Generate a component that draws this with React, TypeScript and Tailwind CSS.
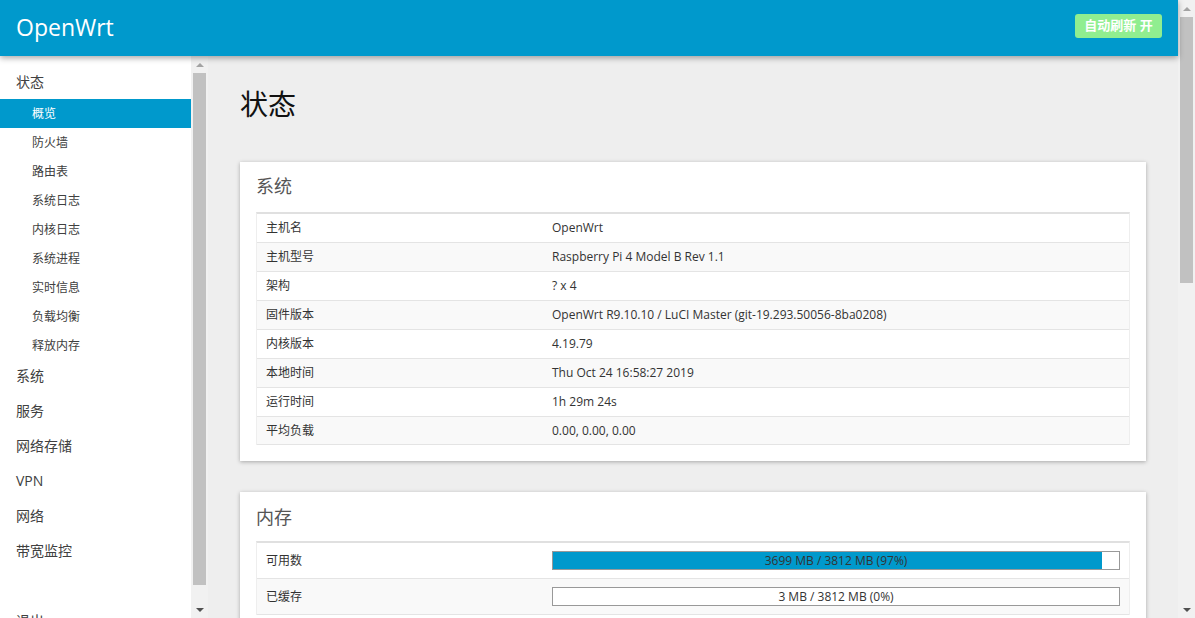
import React from 'react';

const font = { fontFamily: '"Open Sans", "Noto Sans CJK SC", sans-serif' };

const subItems = ['概览', '防火墙', '路由表', '系统日志', '内核日志', '系统进程', '实时信息', '负载均衡', '释放内存'];
const topItems = ['系统', '服务', '网络存储', 'VPN', '网络', '带宽监控'];

const sysRows: [string, string][] = [
  ['主机名', 'OpenWrt'],
  ['主机型号', 'Raspberry Pi 4 Model B Rev 1.1'],
  ['架构', '? x 4'],
  ['固件版本', 'OpenWrt R9.10.10 / LuCI Master (git-19.293.50056-8ba0208)'],
  ['内核版本', '4.19.79'],
  ['本地时间', 'Thu Oct 24 16:58:27 2019'],
  ['运行时间', '1h 29m 24s'],
  ['平均负载', '0.00, 0.00, 0.00'],
];

const memRows: [string, string, number][] = [
  ['可用数', '3699 MB / 3812 MB (97%)', 97],
  ['已缓存', '3 MB / 3812 MB (0%)', 0],
];

function Scrollbar({ thumbTop, thumbHeight }: { thumbTop: number; thumbHeight: number }) {
  return (
    <div className="w-[17px] h-full bg-[#f1f1f1] flex flex-col shrink-0">
      <div className="h-[17px] flex items-center justify-center shrink-0">
        <div className="w-0 h-0 border-l-[4px] border-r-[4px] border-b-[4px] border-l-transparent border-r-transparent border-b-[#a3a3a3]" />
      </div>
      <div className="flex-1 flex flex-col px-[2px]">
        <div style={{ marginTop: thumbTop, height: thumbHeight }} className="bg-[#c1c1c1]" />
        <div className="flex-1" />
      </div>
      <div className="h-[17px] flex items-center justify-center shrink-0">
        <div className="w-0 h-0 border-l-[4px] border-r-[4px] border-t-[4px] border-l-transparent border-r-transparent border-t-[#505050]" />
      </div>
    </div>
  );
}

export default function App() {
  return (
    <div className="w-[1195px] h-[618px] flex overflow-hidden bg-[#eeeeee] text-[#333]" style={font}>
      <div className="flex-1 flex flex-col min-w-0">
        {/* header */}
        <header className="h-[56px] shrink-0 bg-[#0099cc] flex items-center justify-between pl-[16px] pr-[16px] relative z-10 shadow-[0_2px_6px_rgba(0,0,0,0.35)]">
          <span className="text-white text-[23px] leading-none pb-[2px]">OpenWrt</span>
          <span className="bg-[#90ee90] text-white font-bold text-[13px] rounded-[3px] w-[87px] h-[24px] flex items-center justify-center mb-[4px]">
            自动刷新 开
          </span>
        </header>

        <div className="flex-1 flex min-h-0">
          {/* sidebar */}
          <nav className="w-[191px] shrink-0 bg-white pt-[8px] text-[#404040]">
            <div className="h-[35px] flex items-center pl-[16px] text-[14px]">状态</div>
            {subItems.map((s, i) => (
              <div
                key={s}
                className={
                  'h-[29px] flex items-center pl-[32px] text-[12px] ' +
                  (i === 0 ? 'bg-[#0099cc] text-white' : '')
                }
              >
                {s}
              </div>
            ))}
            <div className="-mt-[2px]" />
            {topItems.map((s) => (
              <div key={s} className="h-[35px] flex items-center pl-[16px] text-[14px]">
                {s}
              </div>
            ))}
            <div className="h-[35px] mt-[35px] flex items-center pl-[16px] text-[14px]">退出</div>
          </nav>
          <Scrollbar thumbTop={0} thumbHeight={512} />

          {/* main */}
          <main className="flex-1 min-w-0 px-[32px] pt-[28px]">
            <h2 className="text-[28px] leading-[40px] text-[#111] mb-[38px]">状态</h2>

            <section className="bg-white shadow-[0_1px_4px_rgba(0,0,0,0.3)] px-[16px] pt-[12px] pb-[16px] mb-[31px]">
              <h3 className="text-[18px] leading-[24px] text-[#555] mb-[14px]">系统</h3>
              <div className="border-t-2 border-[#e0e0e0] border-x border-x-[#eee]">
                {sysRows.map(([k, v], i) => (
                  <div
                    key={k}
                    className={
                      'flex items-center text-[12px] border-b border-[#e4e4e4] ' +
                      (i === sysRows.length - 1 ? 'h-[28px] ' : 'h-[29px] ') +
                      (i % 2 ? 'bg-[#f9f9f9]' : 'bg-white')
                    }
                  >
                    <div className="w-[287px] pl-[9px] shrink-0">{k}</div>
                    <div className="pl-[8px]">{v}</div>
                  </div>
                ))}
              </div>
            </section>

            <section className="bg-white shadow-[0_1px_4px_rgba(0,0,0,0.3)] px-[16px] pt-[13px] pb-[17px]">
              <h3 className="text-[18px] leading-[24px] text-[#555] mb-[12px]">内存</h3>
              <div className="border-t-2 border-[#e0e0e0] border-x border-x-[#eee]">
                {memRows.map(([k, v, pct], i) => (
                  <div
                    key={k}
                    className={'h-[36px] flex items-center text-[12px] border-b border-[#e4e4e4] ' + (i % 2 ? 'bg-[#f9f9f9]' : 'bg-white')}
                  >
                    <div className="w-[287px] pl-[9px] shrink-0">{k}</div>
                    <div className="flex-1 pl-[8px] pr-[9px]">
                      <div className="relative h-[19px] border border-[#999] bg-white">
                        <div className="h-full bg-[#0099cc]" style={{ width: pct + '%' }} />
                        <div className="absolute inset-0 flex items-center justify-center text-[12px] text-[#333]">{v}</div>
                      </div>
                    </div>
                  </div>
                ))}
              </div>
            </section>
          </main>
        </div>
      </div>
      <Scrollbar thumbTop={0} thumbHeight={266} />
    </div>
  );
}
